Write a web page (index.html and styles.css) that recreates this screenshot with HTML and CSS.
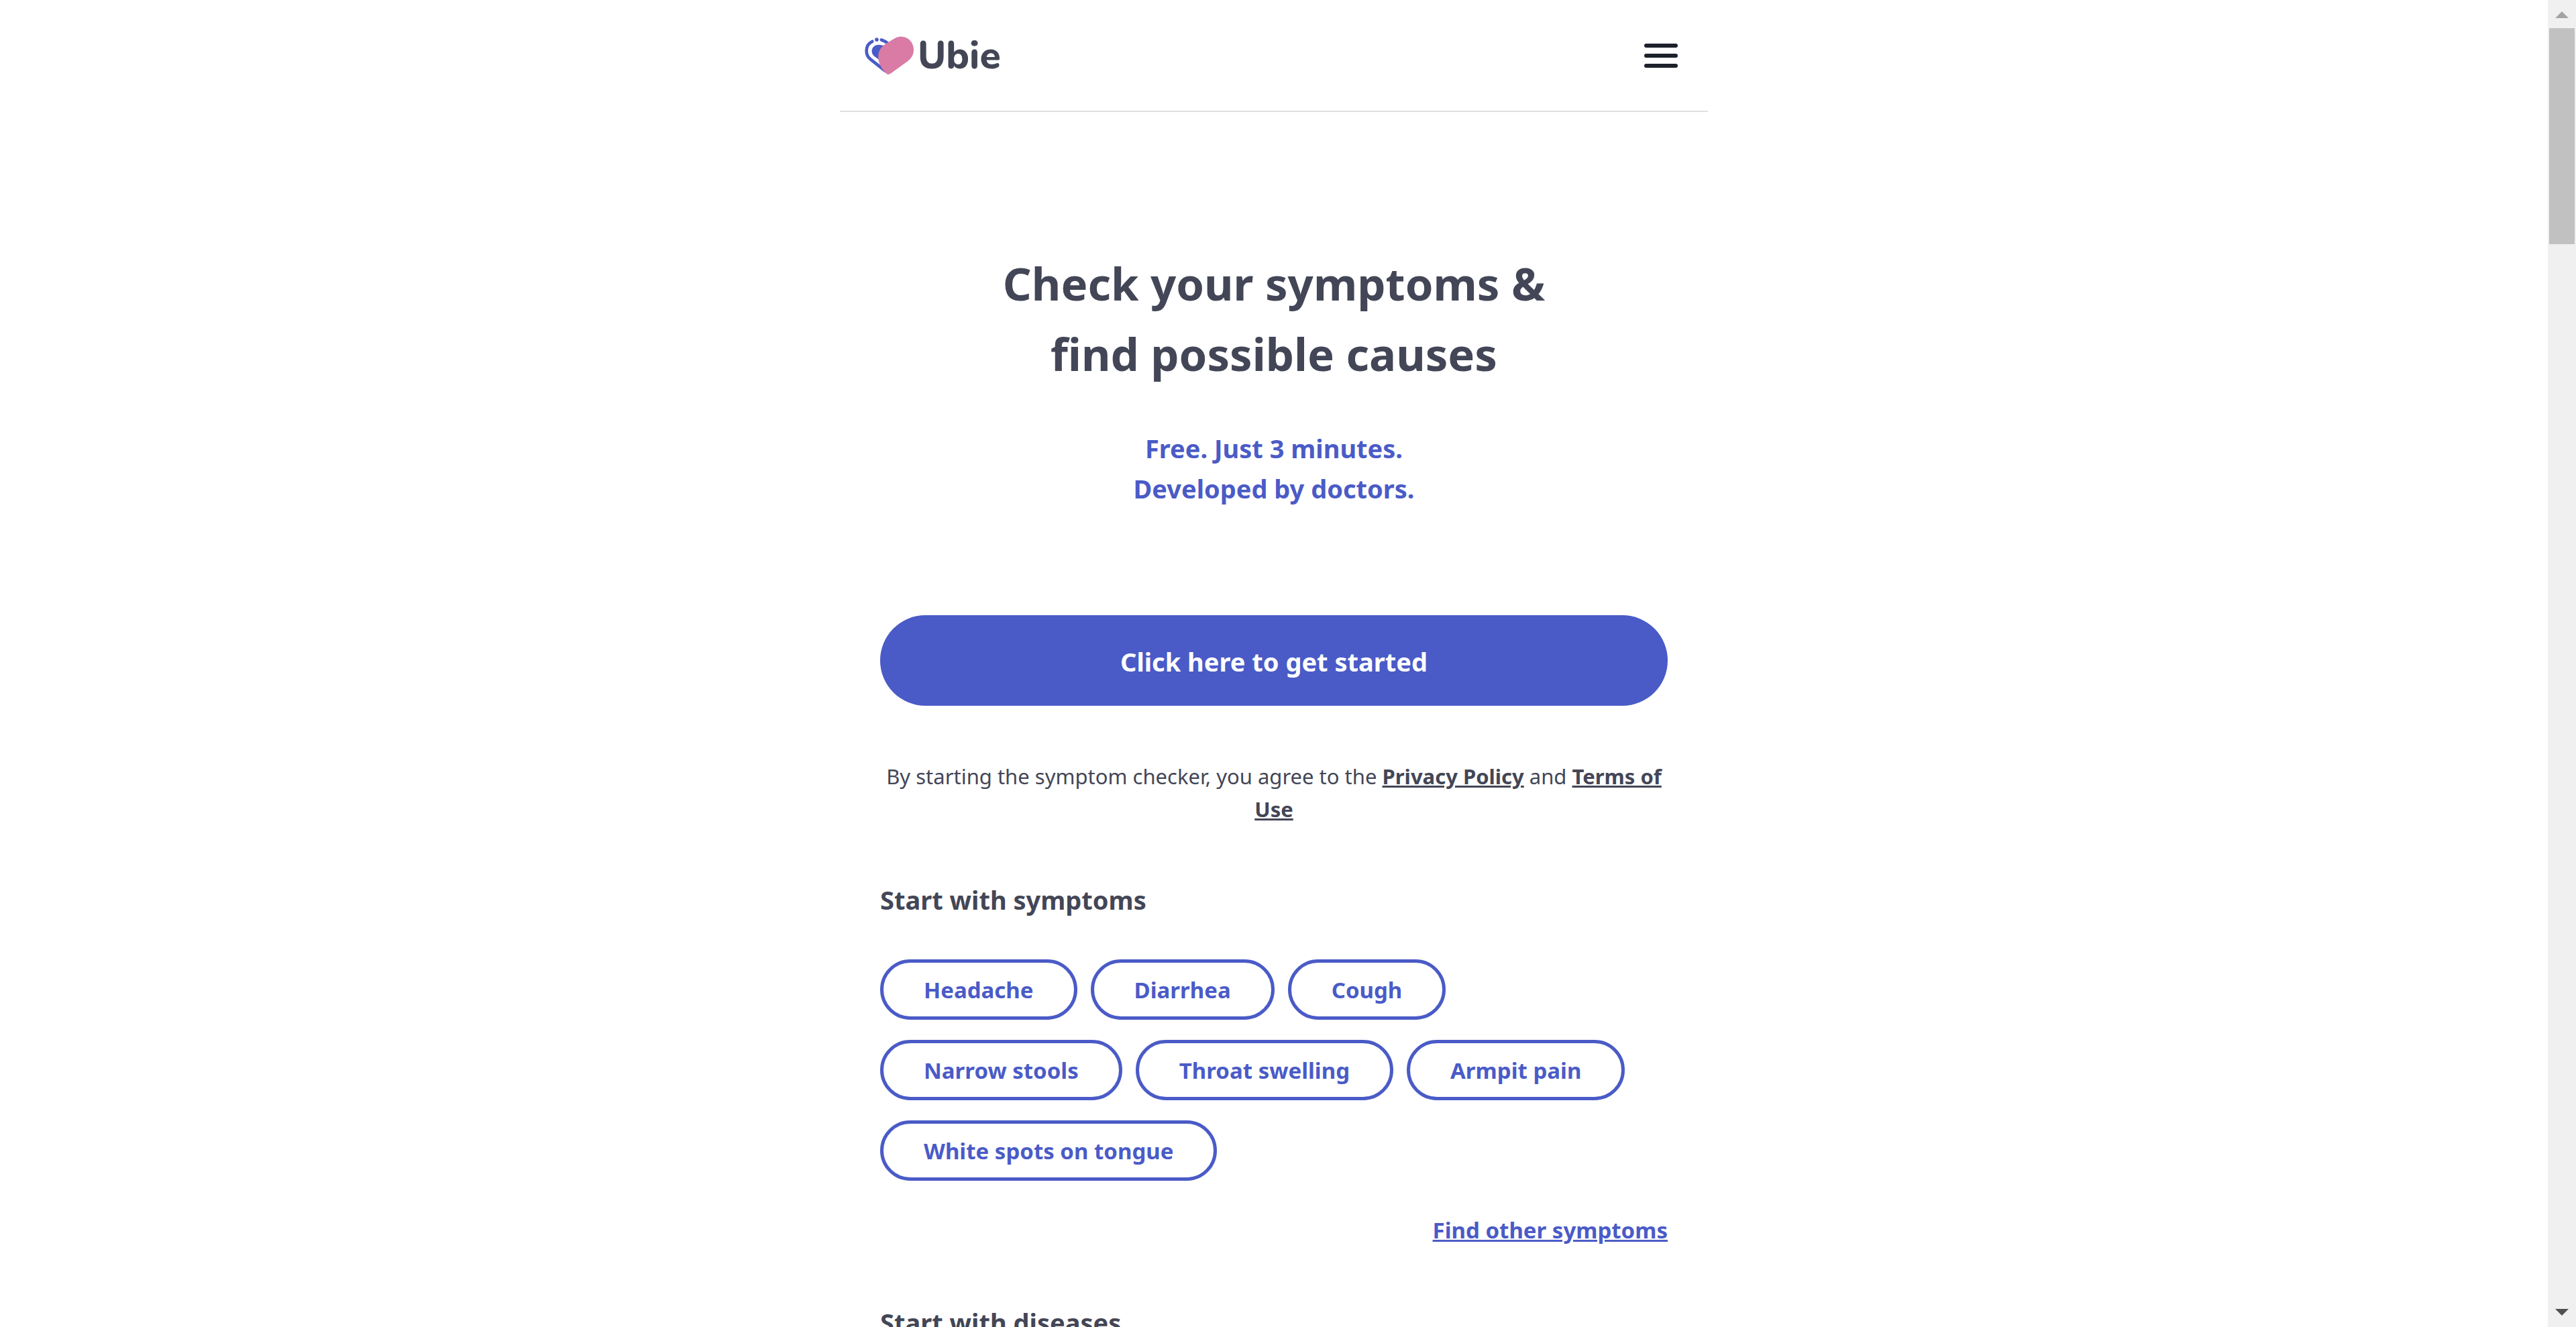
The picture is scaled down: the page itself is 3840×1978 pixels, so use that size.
FILE: index.html
```
<!DOCTYPE html>
<html lang="en">
<head>
  <meta charset="utf-8">
  <meta name="viewport" content="width=device-width, initial-scale=1">
  <title>Ubie Symptom Checker</title>
  <link rel="stylesheet" href="styles.css">
</head>
<body>
  <div class="viewport">
    <div class="page">
      <header class="header">
        <a class="logo" href="#" aria-label="Ubie">
          <svg class="logo-mark" viewBox="27 41 220 174" aria-hidden="true">
            <g fill="none" stroke="#4a5bc7" stroke-width="14" stroke-linecap="round">
              <path d="M61 64C45 71 35 86 35 106c0 17 6 29 18 38l66 52"/>
              <path d="M102 57c14 4 26 11 37 24"/>
            </g>
            <circle cx="81" cy="56" r="8.500" fill="#4a5bc7"/>
            <path fill="#4a5bc7" d="M89 79c-17 0-30 12-30 29 0 11 5 18 12 23l25 19 25-62c-9-6-20-9-32-9z"/>
            <path fill="#d97ba4" d="M122 206C103 186 88 163 88 133c0-25 12-44 30-56l42-26c11-6 19-9 30-9 32 0 57 26 57 59 0 22-9 38-26 51l-77 56c-9 6-15 6-22-2z"/>
          </svg>
          <span class="logo-name">Ubie</span>
        </a>
        <button class="menu" type="button" aria-label="Open menu">
          <span class="menu-bar"></span>
          <span class="menu-bar"></span>
          <span class="menu-bar"></span>
        </button>
      </header>

      <main class="content">
        <h1 class="title">Check your symptoms &amp;<br>find possible causes</h1>
        <p class="tagline">Free. Just 3 minutes.<br>Developed by doctors.</p>
        <button class="start" type="button">Click here to get started</button>
        <p class="terms">By starting the symptom checker, you agree to the <a href="#">Privacy Policy</a> and <a href="#">Terms of Use</a></p>

        <section class="group">
          <h2 class="group-title">Start with symptoms</h2>
          <nav class="chips" aria-label="Symptoms">
            <a class="chip" href="#">Headache</a>
            <a class="chip" href="#">Diarrhea</a>
            <a class="chip" href="#">Cough</a>
            <a class="chip" href="#">Narrow stools</a>
            <a class="chip" href="#">Throat swelling</a>
            <a class="chip" href="#">Armpit pain</a>
            <a class="chip" href="#">White spots on tongue</a>
          </nav>
          <a class="more" href="#">Find other symptoms</a>
        </section>

        <section class="group">
          <h2 class="group-title">Start with diseases</h2>
        </section>
      </main>
    </div>
  </div>

  <div class="scrollbar" aria-hidden="true">
    <svg class="scroll-arrow" viewBox="0 0 20 10"><path fill="#a3a3a3" d="M0 10 10 0l10 10z"/></svg>
    <div class="scroll-thumb"></div>
    <svg class="scroll-arrow scroll-down" viewBox="0 0 20 10"><path fill="#505050" d="M0 0h20L10 10z"/></svg>
  </div>
</body>
</html>
```
FILE: styles.css
```
:root {
  --blue: #4a5bc7;
  --ink: #434656;
}

* {
  box-sizing: border-box;
}

body {
  display: grid;
  grid-template-columns: 1fr 42px;
  height: 100vh;
  margin: 0;
  overflow: hidden;
  background: #fff;
  color: var(--ink);
  font-family: "Segoe UI", "Noto Sans", "Open Sans", sans-serif;
}

h1,
h2,
p {
  margin: 0;
}

.viewport {
  min-width: 0;
  height: 100vh;
  overflow: hidden;
}

.page {
  max-width: 1294px;
  margin: 0 auto;
}

/* Header */

.header {
  display: flex;
  align-items: center;
  justify-content: space-between;
  height: 167px;
  padding: 0 45px 0 37px;
  border-bottom: 2px solid #e0e0e0;
}

.logo {
  display: flex;
  align-items: center;
  gap: 6px;
  color: var(--ink);
  text-decoration: none;
}

.logo-mark {
  width: 73px;
  height: 58px;
}

.logo-name {
  font-family: "Nunito", "Varela Round", "Open Sans", sans-serif;
  font-size: 57px;
  font-weight: 800;
  line-height: 60px;
}

.menu {
  display: grid;
  gap: 9px;
  width: 50px;
  padding: 0;
  border: 0;
  background: none;
}

.menu-bar {
  height: 6px;
  border-radius: 3px;
  background: #1d212c;
}

/* Hero */

.content {
  display: flex;
  flex-direction: column;
  padding: 203px 60px 0;
}

.title {
  font-size: 67px;
  font-weight: 700;
  line-height: 105px;
  text-align: center;
}

.tagline {
  margin-top: 58px;
  color: var(--blue);
  font-size: 38px;
  font-weight: 700;
  line-height: 60px;
  text-align: center;
}

.start {
  height: 135px;
  margin-top: 159px;
  padding: 2px 0 0;
  border: 0;
  border-radius: 68px;
  background: var(--blue);
  color: #fff;
  font-family: inherit;
  font-size: 38px;
  font-weight: 700;
  line-height: 60px;
}

.terms {
  margin-top: 81px;
  font-size: 31px;
  line-height: 49px;
  text-align: center;
}

.terms a {
  color: inherit;
  font-weight: 700;
}

/* Symptom and disease groups */

.group {
  display: flex;
  flex-direction: column;
  margin-top: 80px;
}

.group-title {
  font-size: 38px;
  font-weight: 700;
  line-height: 60px;
}

.chips {
  display: flex;
  flex-wrap: wrap;
  gap: 30px 20px;
  margin-top: 59px;
}

.chip {
  height: 90px;
  padding: 0 60px;
  border: 5px solid var(--blue);
  border-radius: 45px;
  color: var(--blue);
  font-size: 33px;
  font-weight: 700;
  line-height: 82px;
  text-decoration: none;
}

.more {
  align-self: flex-end;
  margin-top: 47px;
  color: var(--blue);
  font-size: 33px;
  font-weight: 700;
  line-height: 54px;
}

.more + .group,
.group + .group {
  margin-top: 80px;
}

.terms a,
.more {
  text-decoration-thickness: 3px;
}

/* Scrollbar */

.scrollbar {
  display: flex;
  flex-direction: column;
  align-items: center;
  padding: 17px 2px;
  background: #f0f0f0;
}

.scroll-arrow {
  width: 20px;
  height: 10px;
}

.scroll-thumb {
  width: 100%;
  height: 322px;
  margin-top: 15px;
  background: #c1c1c1;
}

.scroll-down {
  margin-top: auto;
}
```
